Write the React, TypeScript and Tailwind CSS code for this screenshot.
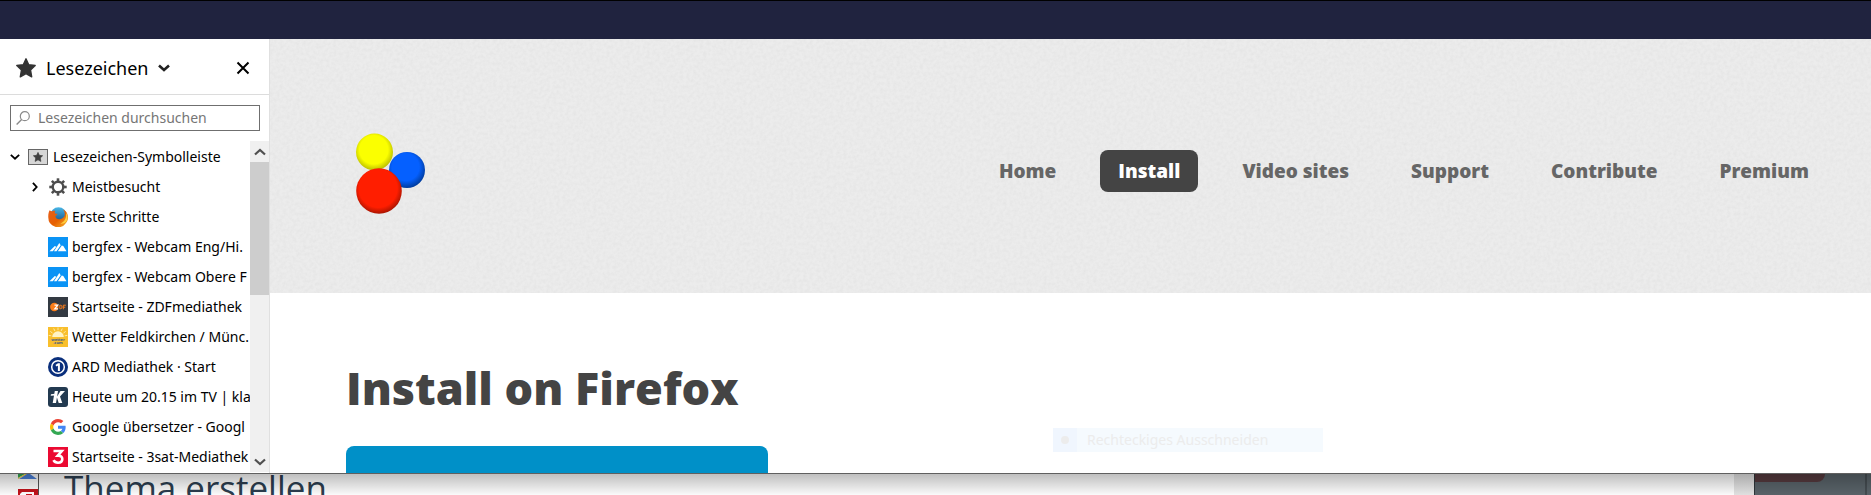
import type { ReactNode } from 'react'

function StarIcon({ className }: { className: string }) {
  return (
    <svg viewBox="0 0 20 20" className={className} aria-hidden="true">
      <path
        d="M10 .8l2.700 5.900 6.500.8-4.700 4.400 1.200 6.900L10 15.600l-5.700 3.200 1.200-6.900L.8 7.500l6.500-.8z"
        fill="currentColor"
        stroke="currentColor"
        strokeWidth="1.4"
        strokeLinejoin="round"
      />
    </svg>
  )
}

function Chevron({ d, className, width = 2.2 }: { d: string; className: string; width?: number }) {
  return (
    <svg viewBox="0 0 12 12" className={className} aria-hidden="true">
      <path d={d} fill="none" stroke="currentColor" strokeWidth={width} />
    </svg>
  )
}

const DOWN = 'M1 3.500l5 4.500 5-4.500'
const UP = 'M1 8.500l5-4.500 5 4.500'
const RIGHT = 'M3.500 1l4.500 5-4.500 5'

function GearIcon() {
  return (
    <svg viewBox="0 0 20 20" className="size-5" aria-hidden="true">
      <g stroke="#4d4d4d" fill="none">
        <circle cx="10" cy="10" r="5.300" strokeWidth="2.400" />
        {[0, 45, 90, 135, 180, 225, 270, 315].map((a) => (
          <path key={a} d="M10 4.500V1.300" strokeWidth="2.600" transform={`rotate(${a} 10 10)`} />
        ))}
      </g>
    </svg>
  )
}

function FirefoxIcon() {
  return (
    <svg viewBox="0 0 20 20" className="size-5" aria-hidden="true">
      <defs>
        <linearGradient id="fox" x1="0" y1="0" x2="1" y2="1">
          <stop offset="0" stopColor="#e8601c" />
          <stop offset=".55" stopColor="#e66000" />
          <stop offset="1" stopColor="#f5b52e" />
        </linearGradient>
        <linearGradient id="globe" x1="0" y1="0" x2="0" y2="1">
          <stop offset="0" stopColor="#48b7e8" />
          <stop offset="1" stopColor="#14477e" />
        </linearGradient>
      </defs>
      <circle cx="10.500" cy="8.500" r="8.300" fill="url(#globe)" />
      <path
        d="M1.600 3.200C2.600 4 3.400 4.200 4.500 4.200c1-.5 2.200-.5 3-.2-1 .8-1 1.800-.4 2.500.9.300 2 .2 2.300.5-.3 1-1.700 1.300-2 2.200.2 2 2.200 3.300 4.200 3 2.600-.2 5.400-2.200 5.200-5 0-2-.7-3.400-1.800-4.700 2.700 1 4 3 4.500 5 .9 2.800.5 6-1.500 8.400A9.700 9.700 0 0 1 .3 10.500C.1 7.500.6 5 1.600 3.200z"
        fill="url(#fox)"
      />
      <path d="M17.800 5.500c1.200 4.500-.8 9-5.500 11.200 3.500.3 6-1 7-4.200.6-2.700.1-5-1.500-7z" fill="#ffcf3d" />
    </svg>
  )
}

function BergfexIcon() {
  return (
    <svg viewBox="0 0 20 20" className="size-5" aria-hidden="true">
      <path d="M0 0h20v20H0z" fill="#0a93f5" />
      <path
        d="M1.500 14.300L6.800 9l1.600.8-3.600 4.500zM6 14.300L11.300 6l1.400 2.300-4.200 6zM9.800 14.300l4-5.800 1.500.6 3.200 5.200z"
        fill="#fff"
      />
    </svg>
  )
}

function ZdfIcon() {
  return (
    <svg viewBox="0 0 20 20" className="size-5" aria-hidden="true">
      <path d="M0 0h20v20H0z" fill="#333a42" />
      <circle cx="6.300" cy="10" r="4.200" fill="#fa7d19" />
      <path d="M6.500 8.200h3.300L6.700 11.800h3.400" fill="none" stroke="#fff" strokeWidth="1.200" />
      <path d="M11.800 8.200v3.600h.5a1.800 1.800 0 0 0 0-3.600zM15.300 12.300V8.200h2.500M15.300 10.200h2" fill="none" stroke="#fa7d19" strokeWidth="1" />
    </svg>
  )
}

function WetterIcon() {
  return (
    <svg viewBox="0 0 20 20" className="size-5" aria-hidden="true">
      <path d="M0 0h20v20H0z" fill="#f9bf2c" />
      <g stroke="#fdf0c0" strokeWidth=".8">
        {[-80, -54, -27, 0, 27, 54, 80].map((a) => (
          <path key={a} d="M10 3.200V.5" transform={`rotate(${a} 10 10)`} />
        ))}
      </g>
      <path d="M4.200 10a5.800 5.800 0 0 1 11.600 0z" fill="#fff3c4" />
      <text x="10" y="13.500" textAnchor="middle" fontSize="4" fontWeight="700" fill="#3c5687" fontFamily="Open Sans">
        wetter
      </text>
      <text x="10" y="17" textAnchor="middle" fontSize="4" fontWeight="700" fill="#3c5687" fontFamily="Open Sans">
        .com
      </text>
    </svg>
  )
}

function ArdIcon() {
  return (
    <svg viewBox="0 0 20 20" className="size-5" aria-hidden="true">
      <circle cx="10" cy="10" r="10" fill="#0a2f7c" />
      <circle cx="10" cy="10" r="6.300" fill="none" stroke="#fff" strokeWidth="1.500" />
      <path d="M8 8.800l2.300-1.600h.6V14" fill="none" stroke="#fff" strokeWidth="2" />
    </svg>
  )
}

function KlackIcon() {
  return (
    <svg viewBox="0 0 20 20" className="size-5" aria-hidden="true">
      <rect width="20" height="20" rx="3" fill="#233a50" />
      <path d="M6.800 4h3.200L8 16H4.700zM12.500 4H17l-5 5.400L14.300 16h-3.600L8.800 10z" fill="#fff" />
      <path d="M3 7.200l4-.4-.3 1.800-4 .2z" fill="#fff" />
    </svg>
  )
}

function GoogleIcon() {
  return (
    <svg viewBox="0 0 48 48" className="size-4" aria-hidden="true">
      <path fill="#EA4335" d="M24 9.500c3.540 0 6.710 1.220 9.210 3.600l6.850-6.850C35.900 2.380 30.470 0 24 0 14.620 0 6.510 5.380 2.560 13.220l7.980 6.190C12.430 13.720 17.740 9.500 24 9.500z" />
      <path fill="#4285F4" d="M46.980 24.550c0-1.570-.15-3.090-.38-4.550H24v9.020h12.940c-.58 2.960-2.260 5.480-4.780 7.180l7.730 6c4.510-4.180 7.090-10.360 7.090-17.650z" />
      <path fill="#FBBC05" d="M10.530 28.590c-.48-1.450-.76-2.990-.76-4.590s.27-3.140.76-4.590l-7.980-6.190C.92 16.460 0 20.120 0 24s.92 7.540 2.560 10.780l7.970-6.190z" />
      <path fill="#34A853" d="M24 48c6.480 0 11.930-2.130 15.890-5.810l-7.730-6c-2.150 1.450-4.920 2.300-8.160 2.300-6.260 0-11.570-4.220-13.470-9.910l-7.980 6.190C6.510 42.620 14.620 48 24 48z" />
    </svg>
  )
}

function DreisatIcon() {
  return (
    <svg viewBox="0 0 20 20" className="size-5" aria-hidden="true">
      <path d="M0 0h20v20H0z" fill="#eb0a32" />
      <path d="M5.500 4h8.300L9.800 8.600c3-.2 4.500 1.300 4.500 3.400 0 2.500-2 3.700-4.300 3.700-2 0-3.600-.8-4.500-2.500" fill="none" stroke="#fff" strokeWidth="2.600" />
    </svg>
  )
}

const bookmarks: { label: string; icon: ReactNode }[] = [
  { label: 'Erste Schritte', icon: <FirefoxIcon /> },
  { label: 'bergfex - Webcam Eng/Hi.', icon: <BergfexIcon /> },
  { label: 'bergfex - Webcam Obere F', icon: <BergfexIcon /> },
  { label: 'Startseite - ZDFmediathek', icon: <ZdfIcon /> },
  { label: 'Wetter Feldkirchen / Münc.', icon: <WetterIcon /> },
  { label: 'ARD Mediathek · Start', icon: <ArdIcon /> },
  { label: 'Heute um 20.15 im TV | kla', icon: <KlackIcon /> },
  { label: 'Google übersetzer - Googl', icon: <GoogleIcon /> },
  { label: 'Startseite - 3sat-Mediathek', icon: <DreisatIcon /> },
]

const navItems = ['Home', 'Install', 'Video sites', 'Support', 'Contribute', 'Premium']

function Sidebar() {
  return (
    <aside className="flex w-[270px] shrink-0 flex-col border-r border-[#e0e0e0] bg-white text-black">
      <div className="flex h-14 items-center border-b border-[#dcdcdc] px-4 pt-[3px]">
        <StarIcon className="size-5 text-[#333333]" />
        <button className="ml-2.5 flex items-center gap-2.5 text-lg">
          Lesezeichen
          <Chevron d={DOWN} className="size-3 text-[#222222]" width={2.6} />
        </button>
        <button className="ml-auto grid size-5 place-items-center" aria-label="Schließen">
          <svg viewBox="0 0 14 14" className="size-3.5" aria-hidden="true">
            <path d="M1.500 1.500l11 11M12.500 1.500l-11 11" stroke="currentColor" strokeWidth="2" />
          </svg>
        </button>
      </div>
      <label className="mt-2.5 mr-[9px] ml-2.5 flex h-[26px] items-center gap-2 border border-[#6f6f6f] pl-[5px]">
        <svg viewBox="0 0 14 14" className="size-3.5 shrink-0" aria-hidden="true">
          <circle cx="8.800" cy="5.200" r="4.500" fill="none" stroke="#8a8a8a" strokeWidth="1.200" />
          <path d="M5.600 8.400L.6 13.400" stroke="#8a8a8a" strokeWidth="1.400" />
        </svg>
        <input
          type="search"
          aria-label="Lesezeichen durchsuchen"
          placeholder="Lesezeichen durchsuchen"
          className="w-full min-w-0 bg-transparent text-sm outline-none placeholder:text-[#767676]"
        />
      </label>
      <div className="mt-2.5 flex">
        <ul className="min-w-0 flex-1 overflow-hidden pt-px text-sm whitespace-nowrap">
          <li className="flex h-[30px] items-center gap-[5px] pl-2.5">
            <Chevron d={DOWN} className="mr-[3px] size-2.5 shrink-0" />
            <span className="grid h-4 w-5 shrink-0 place-items-center border border-[#666666] bg-[#d6d6d6]">
              <StarIcon className="size-2.5 text-[#3f3f3f]" />
            </span>
            Lesezeichen-Symbolleiste
          </li>
          <li className="flex h-[30px] items-center gap-1 pl-[30px]">
            <Chevron d={RIGHT} className="mr-1 size-2.5 shrink-0" />
            <GearIcon />
            Meistbesucht
          </li>
          {bookmarks.map((b) => (
            <li key={b.label} className="h-[30px] pl-12">
              <a href="#" className="flex h-full items-center gap-1">
                <span className="grid size-5 shrink-0 place-items-center">{b.icon}</span>
                {b.label}
              </a>
            </li>
          ))}
        </ul>
        <div className="flex w-[19px] shrink-0 flex-col bg-[#f0f0f0] text-[#505050]">
          <button className="grid h-[21px] place-items-center" aria-label="Nach oben">
            <Chevron d={UP} className="size-3" />
          </button>
          <div className="h-[133px] bg-[#cdcdcd]" />
          <button className="mt-auto grid h-[21px] place-items-center" aria-label="Nach unten">
            <Chevron d={DOWN} className="size-3" />
          </button>
        </div>
      </div>
    </aside>
  )
}

function PaperTexture() {
  return (
    <svg className="absolute inset-0 size-full" aria-hidden="true">
      <filter id="paper">
        <feTurbulence type="fractalNoise" baseFrequency=".3" numOctaves="3" stitchTiles="stitch" />
        <feColorMatrix values="0 0 0 0 .5  0 0 0 0 .5  0 0 0 0 .5  .25 0 0 0 -.08" />
      </filter>
      <rect width="100%" height="100%" filter="url(#paper)" />
    </svg>
  )
}

function Logo() {
  return (
    <svg viewBox="0 0 70 82" className="h-[82px] w-[70px]" role="img" aria-label="Video DownloadHelper">
      <defs>
        <radialGradient id="yellow" cx=".48" cy=".44" r=".55">
          <stop offset=".7" stopColor="#fbff00" />
          <stop offset="1" stopColor="#bcc000" />
        </radialGradient>
        <radialGradient id="blue" cx=".46" cy=".42" r=".58">
          <stop offset=".65" stopColor="#0560ff" />
          <stop offset="1" stopColor="#003c9e" />
        </radialGradient>
        <radialGradient id="red" cx=".48" cy=".44" r=".56">
          <stop offset=".75" stopColor="#ff1e00" />
          <stop offset="1" stopColor="#a81400" />
        </radialGradient>
      </defs>
      <circle cx="18.500" cy="19" r="18.500" fill="url(#yellow)" />
      <circle cx="51" cy="37" r="18" fill="url(#blue)" />
      <circle cx="23" cy="58" r="22.800" fill="url(#red)" />
    </svg>
  )
}

function SitePage() {
  return (
    <main className="relative flex min-w-0 flex-1 flex-col bg-white font-['Open_Sans','Noto_Sans',sans-serif]">
      <header className="relative flex h-[254px] items-center justify-between bg-[#ececec] pr-11 pl-[86px]">
        <PaperTexture />
        <div className="relative pt-4">
          <Logo />
        </div>
        <nav className="relative flex items-center gap-[26px] pt-2.5">
          {navItems.map((item) => (
            <a
              key={item}
              href="#"
              className={
                item === 'Install'
                  ? 'rounded-lg bg-[#444444] px-[18px] py-[9px] text-[19px] leading-6 font-extrabold text-white'
                  : 'px-[18px] py-[9px] text-[19px] leading-6 font-extrabold text-[#666666]'
              }
            >
              {item}
            </a>
          ))}
        </nav>
      </header>
      <section className="flex flex-1 flex-col px-[76px] pt-16">
        <h1 className="text-[45px] leading-[62px] font-extrabold text-[#444444]">Install on Firefox</h1>
        <div className="mt-[27px] w-[422px] flex-1 rounded-t-lg bg-[#0090c8]" />
      </section>
      <div className="absolute top-[389px] left-[783px] flex h-6 w-[270px] items-center bg-[#f5fafe] font-['Noto_Sans',sans-serif] text-sm text-[#ececec]">
        <span className="grid h-full w-6 place-items-center bg-[#f0f6fe]">
          <span className="size-2 rounded-full bg-[#ececec]" />
        </span>
        <span className="ml-2.5">Rechteckiges Ausschneiden</span>
      </div>
    </main>
  )
}

function PageBehind() {
  return (
    <div className="relative flex h-[22px] overflow-hidden border-t border-[#606060] bg-white">
      <div className="flex w-[39px] shrink-0 flex-col items-end border-r border-[#555555]">
        <svg viewBox="0 0 20 21" className="h-[21px] w-5" aria-hidden="true">
          <path d="M0 0h7L0 4z" fill="#34a853" />
          <path d="M0 4l7-4h3L0 5z" fill="#fbd03b" />
          <path d="M1 5l8-5h3l7 5z" fill="#4a80d9" />
          <path d="M0 15h20v6H0z" fill="#c4141c" />
          <path d="M2 21v-1l2-2h12v3h-2v-1H8v1z" fill="#fff" />
        </svg>
      </div>
      <h2 className="flex-1 pl-[25px] font-['Open_Sans',sans-serif] text-[35px] leading-7 text-[#2c3e50]">
        Thema erstellen
      </h2>
      <div className="w-5 bg-[#e4e4e4]" />
      <div className="flex w-[117px] justify-between border-l border-[#30363a] bg-[#5a646a]">
        <div className="h-2 w-[70px] rounded-br-full bg-[#563a3e]" />
        <div className="mr-1 w-0.5 bg-[#454d52]" />
      </div>
      <div className="absolute inset-0 bg-linear-to-b from-black/25 to-black/2" />
    </div>
  )
}

export default function App() {
  return (
    <div className="flex min-h-screen flex-col overflow-hidden bg-white font-['Noto_Sans',sans-serif]">
      <div className="h-[39px] border-t border-black bg-[#20233f]" />
      <div className="flex flex-1">
        <Sidebar />
        <SitePage />
      </div>
      <PageBehind />
    </div>
  )
}
